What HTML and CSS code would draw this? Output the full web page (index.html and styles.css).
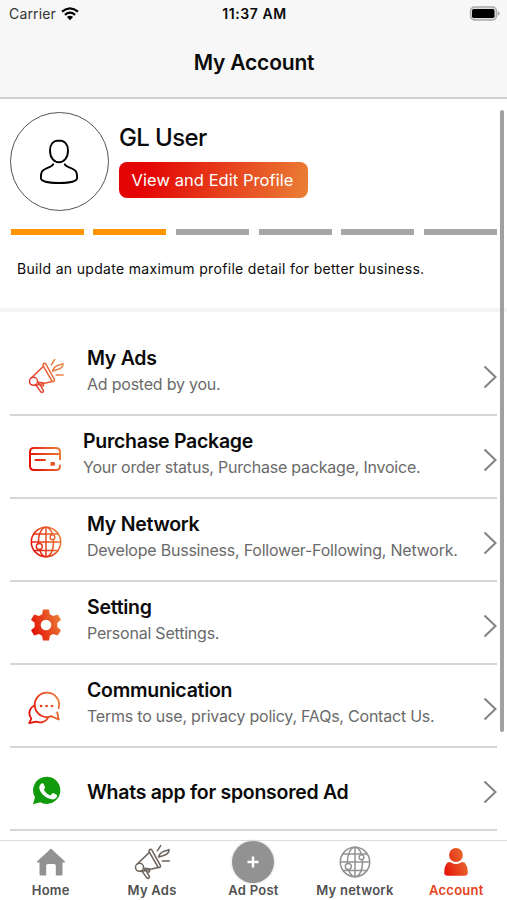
FILE: index.html
```html
<!DOCTYPE html>
<html>
  <head>
    <meta charset="utf-8">
    <title>My Account</title>
    <link rel="stylesheet" href="styles.css">
  </head>
  <body>
    <svg class="defs" width="0" height="0">
      <defs>
        <linearGradient id="warm" gradientUnits="userSpaceOnUse" x1="2" y1="24" x2="34" y2="12">
          <stop offset="0" stop-color="#e30b05"/>
          <stop offset="1" stop-color="#eb8038"/>
        </linearGradient>
        <linearGradient id="soft" gradientUnits="userSpaceOnUse" x1="2" y1="24" x2="34" y2="12">
          <stop offset="0" stop-color="#e5332c"/>
          <stop offset="1" stop-color="#eb8a48"/>
        </linearGradient>
        <symbol id="megaphone" viewBox="0 0 36 36">
          <g fill="none" stroke-width="1.5" stroke-linecap="round" stroke-linejoin="round">
            <path d="M15.400 8.400 3.500 19.800M7.200 27.500 24 23.400"/>
            <circle cx="5.500" cy="23.300" r="4"/>
            <path d="M15.200 6.200c.6-1.200 2-1.200 2.700-.1l8.600 15.600c.5 1.200-1.600 2.700-2.500 1.300L15.300 8.100c-.4-.7-.4-1.200-.1-1.900z"/>
            <path d="M8.200 27.400l4.600 6.500c1.500 1.300 3.300-.1 2.400-1.700L13 28.300l2.600-.6-.6-3-5.200-.4 3.200 3.800"/>
            <path d="M23.300 6.800 26.700 1.600M28.300 17l7-.1"/>
            <path d="M24.700 13.200c.2-2.900 2.400-4.400 4.500-5.500 1.900-1 4.300-.9 5.800-2.200 0 2.300-1.300 4.400-3.500 5.300-2.300 1-4.600.9-6.800 2.400z"/>
          </g>
        </symbol>
        <symbol id="globe" viewBox="0 0 36 36">
          <g fill="none" stroke-width="1.500">
            <circle cx="18" cy="18" r="14.700"/>
            <ellipse cx="18" cy="18" rx="7.600" ry="14.700"/>
            <path d="M18 3.200v29.600M5.500 10h25M3.200 18h29.600M5.500 26.500h25"/>
          </g>
          <g class="node" stroke-width="1.400">
            <circle cx="24.500" cy="13.300" r="2.400"/>
            <circle cx="11.300" cy="22.500" r="3"/>
          </g>
        </symbol>
      </defs>
    </svg>

    <div class="top">
      <div class="status">
        <div class="carrier">
          <span>Carrier</span>
          <svg width="18" height="14" viewBox="0 0 18 14">
            <path d="M1 4.700Q9-2 17 4.700M3.900 7.800Q9 3.500 14.100 7.800" fill="none" stroke="#000" stroke-width="2.200"/>
            <path d="M5.900 10q3.100-2.300 6.200 0L9 13.300z"/>
          </svg>
        </div>
        <div class="time">11:37 AM</div>
        <div class="battery">
          <svg width="31" height="15" viewBox="0 0 31 15">
            <rect x="1.500" y="1" width="26" height="13" rx="4" fill="#ddd" stroke="#aaa" stroke-width="1.300"/>
            <rect x="3" y="3" width="22.500" height="9" rx="1.700"/>
            <path d="M28.700 5.200q2 .5 2 2.300t-2 2.300z" fill="#aaa"/>
          </svg>
        </div>
      </div>
      <h1 class="title">My Account</h1>
    </div>

    <div class="content">
      <div class="profile">
        <div class="avatar">
          <svg width="40" height="46" viewBox="0 0 40 46" fill="none" stroke="#000" stroke-width="1.900" stroke-linecap="round">
            <path d="M20 1.500c-5.600 0-9 3.900-9 10 0 7.300 4 11.700 9 11.700s9-4.400 9-11.700c0-6.100-3.400-10-9-10z"/>
            <path d="M14.200 25.300c-1 3.400-9.700 3.300-11.500 7.800-.8 2-.9 4.200-.8 6.200C2.400 42.500 11.500 44 20 44s17.600-1.500 18.100-4.700c.1-2 0-4.200-.8-6.200-1.800-4.500-10.500-4.400-11.500-7.800"/>
          </svg>
        </div>
        <div class="who">
          <div class="name">GL User</div>
          <div class="edit">View and Edit Profile</div>
        </div>
      </div>
      <div class="steps">
        <div class="step done"></div>
        <div class="step done"></div>
        <div class="step"></div>
        <div class="step"></div>
        <div class="step"></div>
        <div class="step"></div>
      </div>
      <div class="hint">Build an update maximum profile detail for better business.</div>
      <div class="band"></div>

      <div class="list">
        <div class="row">
          <svg class="icon" viewBox="0 0 36 36" stroke="url(#soft)"><use href="#megaphone"/></svg>
          <div class="text">
            <div class="label">My Ads</div>
            <div class="sub">Ad posted by you.</div>
          </div>
          <svg class="arrow" viewBox="0 0 14 24"><path d="M1.500 1.500 12.500 12l-11 10.500"/></svg>
        </div>
        <div class="row">
          <svg class="icon" viewBox="0 0 36 36" fill="none" stroke="url(#warm)" stroke-width="2" stroke-linecap="round">
            <path d="M32 18.300V11q0-4-4-4H6Q2 7 2 11v14q0 4 4 4h22q4 0 4-4v-.5M2.500 13h29.500" />
            <path d="M7.500 19h9.500"/>
            <rect x="23.500" y="22" width="2.500" height="1.800" stroke-linejoin="round"/>
          </svg>
          <div class="text package">
            <div class="label">Purchase Package</div>
            <div class="sub">Your order status, Purchase package, Invoice.</div>
          </div>
          <svg class="arrow" viewBox="0 0 14 24"><path d="M1.500 1.500 12.500 12l-11 10.500"/></svg>
        </div>
        <div class="row">
          <svg class="icon" viewBox="0 0 36 36" stroke="url(#warm)"><use href="#globe"/></svg>
          <div class="text">
            <div class="label">My Network</div>
            <div class="sub">Develope Bussiness, Follower-Following, Network.</div>
          </div>
          <svg class="arrow" viewBox="0 0 14 24"><path d="M1.500 1.500 12.500 12l-11 10.500"/></svg>
        </div>
        <div class="row">
          <svg class="icon" viewBox="0 0 36 36" fill="url(#warm)">
            <path fill-rule="evenodd" d="M15 2.500h6l.9 4.700 3.300 1.900 4.600-1.600 3.200 5.200-3.700 3.300v4l3.700 3.300-3.200 5.200-4.600-1.600-3.300 1.900-.9 4.700h-6l-.9-4.700-3.300-1.900-4.600 1.600L3 23.300 6.700 20v-4L3 12.700l3.200-5.200 4.600 1.600 3.300-1.900zM18 12.700a5.300 5.300 0 1 0 0 10.600 5.300 5.300 0 1 0 0-10.600z"/>
          </svg>
          <div class="text">
            <div class="label">Setting</div>
            <div class="sub">Personal Settings.</div>
          </div>
          <svg class="arrow" viewBox="0 0 14 24"><path d="M1.500 1.500 12.500 12l-11 10.500"/></svg>
        </div>
        <div class="row">
          <svg class="icon" viewBox="0 0 36 36" fill="none" stroke="url(#warm)" stroke-width="1.800" stroke-linecap="round" stroke-linejoin="round">
            <path d="M30.700 18.200A12.200 12.200 0 1 0 23.500 26.200l7.200 3.300-1.500-7"/>
            <path d="M6.500 15.500C.5 18.500.3 25 3.300 28.500L1.300 33.200l6.700-1.500c5 1.500 9.700 0 11.700-3.500"/>
            <path d="M13 16h.1M18.500 16h.1M24 16h.1" stroke-width="2.700"/>
          </svg>
          <div class="text">
            <div class="label">Communication</div>
            <div class="sub">Terms to use, privacy policy, FAQs, Contact Us.</div>
          </div>
          <svg class="arrow" viewBox="0 0 14 24"><path d="M1.500 1.500 12.500 12l-11 10.500"/></svg>
        </div>
        <div class="row">
          <svg class="icon" viewBox="0 0 36 36">
            <path d="M18.800 3.700a13.600 13.600 0 1 1-6.500 25.600L5 31.200l2-7A13.600 13.600 0 0 1 18.800 3.700z" fill="#119a0b"/>
            <path d="M13.500 10.500c.8-.5 1.800-.3 2.200.6l1.300 3.100c.3.800-.9 1.900-1.300 2.400 1.600 3 3.700 4.800 6.800 6l1.800-2.200c.4-.5.9-.4 1.400-.1l2.900 1.400c.9.500.5 2-.1 2.900-1 1.500-3.200 2.200-5.100 1.700-6.200-1.400-10.900-6-12-10.500-.5-2.200.6-4.300 2.100-5.300z" fill="#fff"/>
          </svg>
          <div class="text">
            <div class="label whats">Whats app for sponsored Ad</div>
          </div>
          <svg class="arrow" viewBox="0 0 14 24"><path d="M1.500 1.500 12.500 12l-11 10.500"/></svg>
        </div>
      </div>
      <div class="scrollbar"></div>
    </div>

    <div class="tabs">
      <div class="tab">
        <svg viewBox="0 0 36 36" fill="#929292"><path d="M18 4.500 32 17.500q.5 1-.5 1h-2v12q0 1-1 1h-5.700V21.700q0-1.700-1.700-1.700h-6.200q-1.700 0-1.700 1.700v9.800H7.500q-1 0-1-1v-12h-2q-1 0-.5-1z"/></svg>
        <span>Home</span>
      </div>
      <div class="tab">
        <svg viewBox="0 0 36 36" stroke="#6d6259"><use href="#megaphone"/></svg>
        <span>My Ads</span>
      </div>
      <div class="tab">
        <div class="plus"><svg viewBox="0 0 12 12" stroke="#fff" stroke-width="2.400"><path d="M6 .5v11M.5 6h11"/></svg></div>
        <span>Ad Post</span>
      </div>
      <div class="tab">
        <svg viewBox="0 0 36 36" stroke="#929292"><use href="#globe"/></svg>
        <span>My network</span>
      </div>
      <div class="tab active">
        <svg viewBox="0 0 36 36" fill="url(#warm)"><circle cx="18" cy="11" r="6.900"/><path d="M9.500 18.500Q12 17.500 13.500 18.700q4.500 2.500 9 0 1.500-1.200 4-.2Q29.800 22 29.800 28.500q0 3.200-3.500 3.200H9.700q-3.500 0-3.500-3.200 0-6.500 3.300-10z"/></svg>
        <span>Account</span>
      </div>
    </div>
  </body>
</html>
```

FILE: styles.css
```css
* {
  box-sizing: border-box;
}
body {
  margin: 0;
  height: 900px;
  overflow: hidden;
  display: flex;
  flex-direction: column;
  background: #fff;
  color: #0a0a0a;
  font-family: Inter, "Liberation Sans", sans-serif;
  white-space: nowrap;
}
.defs {
  position: absolute;
}

.top {
  height: 99px;
  flex: none;
  background: #f7f7f7;
  border-bottom: 2px solid #d0d0d0;
}
.status {
  height: 27px;
  display: grid;
  grid-template-columns: 1fr auto 1fr;
  align-items: center;
  padding: 0 7px 0 9px;
  font-size: 14px;
}
.carrier {
  display: flex;
  align-items: center;
  gap: 5px;
  color: #333;
  letter-spacing: 0.15px;
}
.time {
  font-weight: 600;
  letter-spacing: 0.6px;
}
.battery {
  display: flex;
  justify-content: flex-end;
}
.title {
  margin: 0;
  padding-left: 1px;
  text-align: center;
  font-size: 21px;
  line-height: 71px;
  font-weight: 600;
  letter-spacing: -0.2px;
}

.content {
  flex: 1;
  min-height: 0;
  overflow: hidden;
  position: relative;
}
.profile {
  display: flex;
  gap: 10px;
  padding: 13px 10px 0;
}
.avatar {
  width: 99px;
  height: 99px;
  border: 1px solid #555;
  border-radius: 50%;
  display: flex;
  align-items: center;
  justify-content: center;
}
.avatar svg {
  margin-right: 1px;
}
.name {
  height: 50px;
  line-height: 52px;
  font-size: 24px;
  font-weight: 500;
  letter-spacing: -0.6px;
}
.edit {
  width: 189px;
  height: 36px;
  padding-right: 2px;
  line-height: 37px;
  border-radius: 8px;
  background: linear-gradient(105deg, #e30504 15%, #ea8036);
  color: #fff;
  text-align: center;
  font-size: 16.500px;
  letter-spacing: 0.05px;
}
.steps {
  display: flex;
  gap: 9.500px;
  padding: 18px 10px 0 10.500px;
}
.step {
  flex: 1;
  height: 6px;
  background: #a6a6a6;
}
.done {
  background: #fe9500;
}
.hint {
  height: 73px;
  padding-left: 17px;
  line-height: 67px;
  font-size: 14px;
  letter-spacing: 0.32px;
}
.band {
  height: 4px;
  background: #f5f5f5;
}

.list {
  padding: 21px 10px 0;
}
.row {
  height: 83px;
  display: flex;
  align-items: center;
  border-bottom: 2px solid #d6d6d6;
}
.icon {
  width: 36px;
  height: 36px;
  margin: 5px 22px 0 18px;
  flex: none;
}
.text {
  flex: 1;
  padding: 0 0 6px 1px;
}
.package {
  margin-left: -4px;
}
.label {
  font-size: 19.500px;
  line-height: 26px;
  font-weight: 600;
  letter-spacing: -0.28px;
}
.whats {
  padding-top: 12px;
}
.sub {
  font-size: 16px;
  line-height: 26px;
  color: #6a6a6a;
  letter-spacing: -0.22px;
}
.arrow {
  width: 14px;
  height: 24px;
  margin-top: 6px;
  fill: none;
  stroke: #828282;
  stroke-width: 2;
}
.node {
  fill: #fff;
}
.scrollbar {
  position: absolute;
  top: 11px;
  right: 3px;
  width: 4px;
  height: 622px;
  border-radius: 2px;
  background: #a0a0a0;
}

.tabs {
  height: 60px;
  flex: none;
  display: grid;
  grid-template-columns: repeat(5, 1fr);
  border-top: 1px solid #ddd;
}
.tab {
  display: flex;
  flex-direction: column;
  align-items: center;
  padding-top: 3px;
  font-size: 13px;
  line-height: 20px;
  font-weight: 600;
  letter-spacing: 0.25px;
  color: #505050;
}
.tab > svg {
  width: 36px;
  height: 36px;
}
.plus {
  width: 42px;
  height: 42px;
  margin: -3px 0;
  border-radius: 50%;
  background: #929292;
  box-shadow: 0 0 3px #ccc;
  display: flex;
  align-items: center;
  justify-content: center;
}
.plus svg {
  width: 12px;
  height: 12px;
}
.active {
  color: #e5431b;
}
```
